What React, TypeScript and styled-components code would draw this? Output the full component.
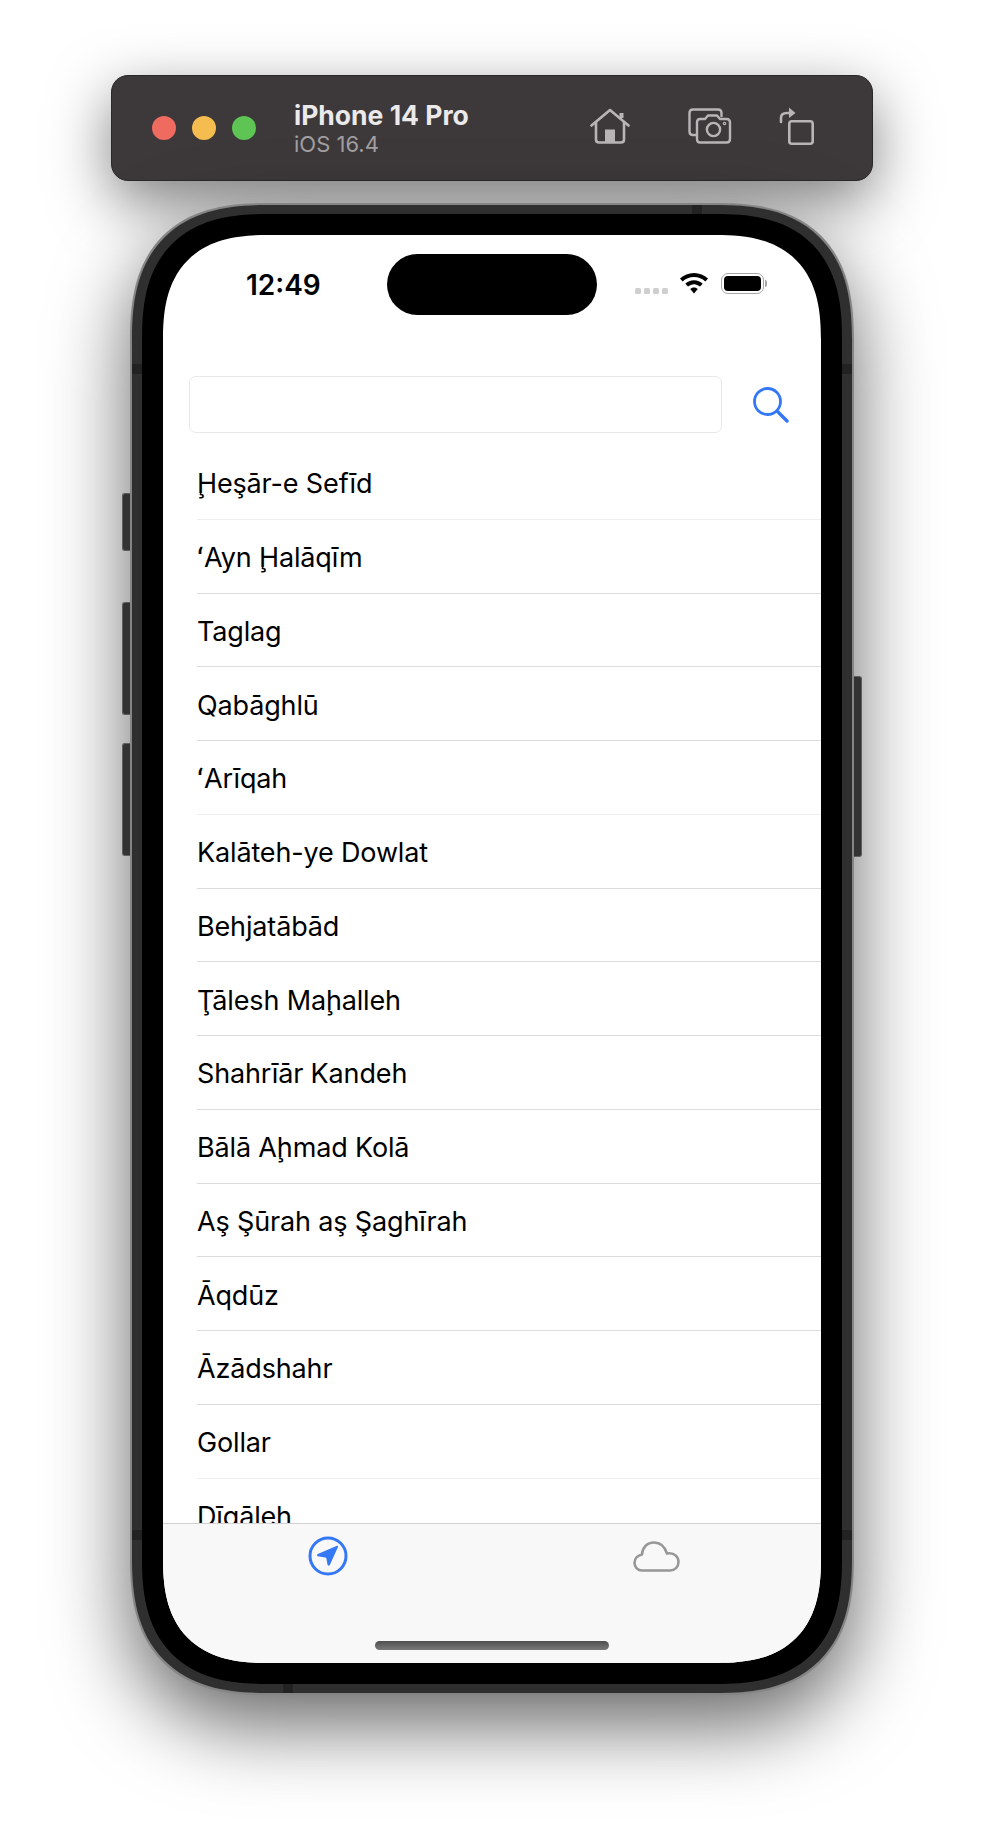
import React from "react";
import styled, { createGlobalStyle } from "styled-components";

const places = [
  "Ḩeşār-e Sefīd",
  "ʻAyn Ḩalāqīm",
  "Taglag",
  "Qabāghlū",
  "ʻArīqah",
  "Kalāteh-ye Dowlat",
  "Behjatābād",
  "Ţālesh Maḩalleh",
  "Shahrīār Kandeh",
  "Bālā Aḩmad Kolā",
  "Aş Şūrah aş Şaghīrah",
  "Āqdūz",
  "Āzādshahr",
  "Gollar",
  "Dīgāleh",
];

const GlobalStyle = createGlobalStyle`
  html, body {
    margin: 0;
    padding: 0;
    background: #fff;
  }
  * {
    box-sizing: border-box;
  }
`;

export default function App() {
  return (
    <>
      <GlobalStyle />
      <Page>
        <Toolbar>
          <Lights>
            <Light $color="#ef6a5f" />
            <Light $color="#f5bd4f" />
            <Light $color="#5ec454" />
          </Lights>
          <DeviceInfo>
            <DeviceName>iPhone 14 Pro</DeviceName>
            <DeviceOs>iOS 16.4</DeviceOs>
          </DeviceInfo>
          <ToolbarIcons>
            <HomeIcon />
            <ToolbarIcon $gap={58}>
              <CameraIcon />
            </ToolbarIcon>
            <ToolbarIcon $gap={47}>
              <RotateIcon />
            </ToolbarIcon>
          </ToolbarIcons>
        </Toolbar>
        <Phone>
          <SideButton $side="left" $top={288} $height={58} />
          <SideButton $side="left" $top={397} $height={113} />
          <SideButton $side="left" $top={538} $height={113} />
          <SideButton $side="right" $top={471} $height={181} />
          <BandH $edge="top" $at={560} />
          <BandH $edge="bottom" $at={151} />
          <BandV $edge="left" $at={159} />
          <BandV $edge="right" $at={159} />
          <BandV $edge="left" $at={1325} />
          <BandV $edge="right" $at={1325} />
          <Bezel>
            <Screen>
              <StatusBar>
                <Time>12:49</Time>
                <Island />
                <StatusIcons>
                  <SignalDots>
                    <SignalDot />
                    <SignalDot />
                    <SignalDot />
                    <SignalDot />
                  </SignalDots>
                  <WifiIcon />
                  <Battery>
                    <BatteryFill />
                  </Battery>
                  <BatteryTip />
                </StatusIcons>
              </StatusBar>
              <SearchRow>
                <SearchInput />
                <SearchIcon />
              </SearchRow>
              <List>
                {places.map((name, i) => (
                  <Row key={name} $faint={i === 0 || i === 4 || i === 13}>
                    {name}
                  </Row>
                ))}
              </List>
              <TabBar>
                <Tab>
                  <NavIcon />
                </Tab>
                <Tab>
                  <CloudIcon />
                </Tab>
                <HomeIndicator />
              </TabBar>
            </Screen>
          </Bezel>
        </Phone>
      </Page>
    </>
  );
}

function HomeIcon() {
  return (
    <svg width="40" height="36" viewBox="0 0 40 36" fill="none" stroke="#b9b5b7" strokeWidth="2.6" strokeLinecap="round" strokeLinejoin="round">
      <path d="M1.5 17.5 L20 2 L38.5 17.5" />
      <path d="M6 14.5 V31.5 Q6 34.5 9 34.5 H31 Q34 34.5 34 31.5 V14.5" />
      <path d="M31.5 10 V5" strokeWidth="4" strokeLinecap="butt" />
      <path d="M15 35 V21.5 H25 V35 Z" fill="#b9b5b7" stroke="none" />
    </svg>
  );
}

function CameraIcon() {
  return (
    <svg width="44" height="36" viewBox="0 0 44 36" fill="none" stroke="#b9b5b7" strokeWidth="2.4" strokeLinecap="round" strokeLinejoin="round">
      <path d="M8.5 27 H5 Q1.5 27 1.5 23.5 V5 Q1.5 1.5 5 1.5 H30 Q33.5 1.5 33.5 5 V8" />
      <path d="M12 11 H17 L20 7.5 H29 L32 11 H38.5 Q42 11 42 14.5 V31 Q42 34.5 38.5 34.5 H12 Q9 34.5 9 31 V14.5 Q9 11 12 11 Z" />
      <circle cx="25.5" cy="21.5" r="6.6" />
      <circle cx="36.5" cy="15.5" r="0.6" />
    </svg>
  );
}

function RotateIcon() {
  return (
    <svg width="36" height="38" viewBox="0 0 36 38" fill="none" stroke="#b9b5b7" strokeWidth="2.6" strokeLinecap="round" strokeLinejoin="round">
      <rect x="10.3" y="14.3" width="23.4" height="22.4" rx="2.5" />
      <path d="M2 15 V11 Q2 6 8 6 H11" />
      <path d="M10 0.5 L16.5 6 L10 11 Z" fill="#b9b5b7" stroke="none" />
    </svg>
  );
}

function WifiIcon() {
  return (
    <WifiSvg width="28" height="21" viewBox="0 0 28 21" fill="#000">
      <path d="M14 0 C19.4 0 24.3 2.1 28 5.6 L25.4 8.4 C22.4 5.6 18.4 3.9 14 3.9 C9.6 3.9 5.6 5.6 2.6 8.4 L0 5.6 C3.7 2.1 8.6 0 14 0 Z" />
      <path d="M14 7.3 C17.4 7.3 20.4 8.6 22.7 10.8 L20 13.6 C18.4 12.1 16.3 11.2 14 11.2 C11.7 11.2 9.6 12.1 8 13.6 L5.3 10.8 C7.6 8.6 10.6 7.3 14 7.3 Z" />
      <path d="M14 14.4 C15.5 14.4 16.8 15 17.8 15.9 L14 20.5 L10.2 15.9 C11.2 15 12.5 14.4 14 14.4 Z" />
    </WifiSvg>
  );
}

function SearchIcon() {
  return (
    <SearchSvg width="36" height="36" viewBox="0 0 36 36" fill="none" stroke="#3478f6" strokeWidth="2.8" strokeLinecap="round">
      <circle cx="14.5" cy="14.5" r="13" />
      <path d="M24.5 24.5 L34 34" strokeWidth="3.4" />
    </SearchSvg>
  );
}

function NavIcon() {
  return (
    <svg width="40" height="40" viewBox="0 0 40 40">
      <circle cx="20" cy="20" r="18" fill="none" stroke="#3478f6" strokeWidth="3" />
      <path d="M29 9.8 Q30.5 9.4 30 11 L21.8 29 Q20.6 30.6 19.6 29 L18.4 22.6 Q18.2 21.8 17.2 21.6 L9.6 20.2 Q8 19.2 9.8 18 Z" fill="#3478f6" />
    </svg>
  );
}

function CloudIcon() {
  return (
    <svg width="47" height="31" viewBox="0 0 47 31" fill="none" stroke="#979797" strokeWidth="2.6" strokeLinejoin="round">
      <path d="M9 29.5 H37 C41.8 29.5 45.5 26 45.5 21 C45.5 15.8 41.5 12.2 36.5 12.2 C35.4 12.2 34.8 12.2 34 12.5 C31.8 5.5 27 1.5 21 1.5 C14 1.5 9.4 6.5 9 13.5 C4.6 14.4 1.5 17.6 1.5 21.8 C1.5 26.4 4.8 29.5 9 29.5 Z" />
    </svg>
  );
}

const Page = styled.div`
  width: 984px;
  height: 1846px;
  padding-top: 75px;
  display: flex;
  flex-direction: column;
  align-items: center;
  gap: 22px;
  overflow: hidden;
  background: #fff;
`;

const Toolbar = styled.div`
  width: 762px;
  height: 106px;
  flex: none;
  padding: 0 57px 0 40px;
  display: flex;
  align-items: center;
  background: #3d393b;
  border: 1px solid #2a2829;
  border-radius: 17px;
  box-shadow: 0 20px 60px rgba(0, 0, 0, 0.5);
  font-family: "Inter", "Liberation Sans", sans-serif;
`;

const Lights = styled.div`
  display: flex;
  gap: 16px;
`;

const Light = styled.div<{ $color: string }>`
  width: 24px;
  height: 24px;
  border-radius: 50%;
  background: ${(p) => p.$color};
`;

const DeviceInfo = styled.div`
  margin-left: 38px;
  display: flex;
  flex-direction: column;
  gap: 0;
`;

const DeviceName = styled.div`
  font-size: 26.5px;
  font-weight: 700;
  line-height: 30px;
  color: #ebe9ea;
`;

const DeviceOs = styled.div`
  margin-top: 1px;
  font-size: 22px;
  line-height: 26px;
  color: #a29fa1;
`;

const ToolbarIcons = styled.div`
  margin: 0 0 5px auto;
  display: flex;
  align-items: center;
`;

const ToolbarIcon = styled.div<{ $gap: number }>`
  margin-left: ${(p) => p.$gap}px;
  display: flex;
`;

const Phone = styled.div`
  position: relative;
  flex: none;
  width: 724px;
  height: 1492px;
  padding: 9px 10px;
  background: #2f2f2f;
  border: 2px solid #858585;
  border-radius: 138px;
  corner-shape: superellipse(1.35);
  box-shadow: 0 30px 80px rgba(0, 0, 0, 0.6);
`;

const SideButton = styled.div<{ $side: "left" | "right"; $top: number; $height: number }>`
  position: absolute;
  ${(p) => p.$side}: -10px;
  top: ${(p) => p.$top}px;
  height: ${(p) => p.$height}px;
  width: 8px;
  background: #333;
  border: 1px solid #5e5e5e;
  border-${(p) => (p.$side === "left" ? "right" : "left")}: none;
  border-radius: ${(p) => (p.$side === "left" ? "3px 0 0 3px" : "0 3px 3px 0")};
`;

const BandH = styled.div<{ $edge: "top" | "bottom"; $at: number }>`
  position: absolute;
  ${(p) => p.$edge}: 0;
  left: ${(p) => p.$at}px;
  width: 10px;
  height: 9px;
  background: #222;
`;

const BandV = styled.div<{ $edge: "left" | "right"; $at: number }>`
  position: absolute;
  ${(p) => p.$edge}: 0;
  top: ${(p) => p.$at}px;
  width: 10px;
  height: 10px;
  background: #222;
`;

const Bezel = styled.div`
  width: 100%;
  height: 100%;
  padding: 21px;
  background: #000;
  border-radius: 126px;
  corner-shape: superellipse(1.35);
`;

const Screen = styled.div`
  width: 100%;
  height: 100%;
  display: flex;
  flex-direction: column;
  overflow: hidden;
  background: #fff;
  border-radius: 105px;
  corner-shape: superellipse(1.35);
  font-family: "Inter", "Liberation Sans", sans-serif;
`;

const StatusBar = styled.div`
  flex: none;
  height: 141px;
  padding: 19px 0 0 83px;
  display: flex;
  align-items: flex-start;
`;

const Time = styled.div`
  width: 141px;
  margin-top: 18px;
  font-size: 28px;
  font-weight: 600;
  line-height: 26px;
  color: #000;
`;

const Island = styled.div`
  width: 210px;
  height: 61px;
  border-radius: 31px;
  background: #000;
`;

const StatusIcons = styled.div`
  margin: 19px 0 0 38px;
  display: flex;
  align-items: flex-start;
`;

const SignalDots = styled.div`
  margin-top: 15px;
  display: flex;
  gap: 3px;
`;

const SignalDot = styled.div`
  width: 6px;
  height: 6px;
  border-radius: 1.5px;
  background: #cfcfcf;
`;

const WifiSvg = styled.svg`
  margin-left: 12px;
`;

const Battery = styled.div`
  margin-left: 13px;
  width: 43px;
  height: 21px;
  padding: 2px;
  border: 1.5px solid #a5a5a5;
  border-radius: 7px;
`;

const BatteryFill = styled.div`
  width: 100%;
  height: 100%;
  border-radius: 4px;
  background: #000;
`;

const BatteryTip = styled.div`
  margin: 7px 0 0 1px;
  width: 2px;
  height: 7px;
  border-radius: 0 2px 2px 0;
  background: #a5a5a5;
`;

const SearchRow = styled.div`
  flex: none;
  height: 70px;
  padding-left: 26px;
  display: flex;
  align-items: flex-start;
`;

const SearchInput = styled.div`
  width: 533px;
  height: 57px;
  background: #fff;
  border: 1px solid #e8e8e8;
  border-radius: 7px;
`;

const SearchSvg = styled.svg`
  margin: 11px 0 0 31px;
`;

const List = styled.div`
  flex: 1;
  min-height: 0;
  overflow: hidden;
  padding-left: 34px;
`;

const Row = styled.div<{ $faint?: boolean }>`
  height: 73.75px;
  padding-top: 3px;
  display: flex;
  align-items: center;
  border-bottom: 1px solid ${(p) => (p.$faint ? "#eeeeee" : "#dcdcdc")};
  font-size: 27px;
  letter-spacing: -0.15px;
  color: #000;
  white-space: nowrap;
`;

const TabBar = styled.div`
  position: relative;
  flex: none;
  height: 140px;
  display: grid;
  grid-template-columns: 1fr 1fr;
  align-items: start;
  background: #f8f8f8;
  border-top: 1px solid #d2d2d2;
`;

const Tab = styled.div`
  height: 64px;
  display: flex;
  align-items: center;
  justify-content: center;
`;

const HomeIndicator = styled.div`
  position: absolute;
  left: 212px;
  bottom: 13px;
  width: 234px;
  height: 9px;
  border-radius: 5px;
  background: linear-gradient(#4f4f4f, #7a7a7a);
`;
